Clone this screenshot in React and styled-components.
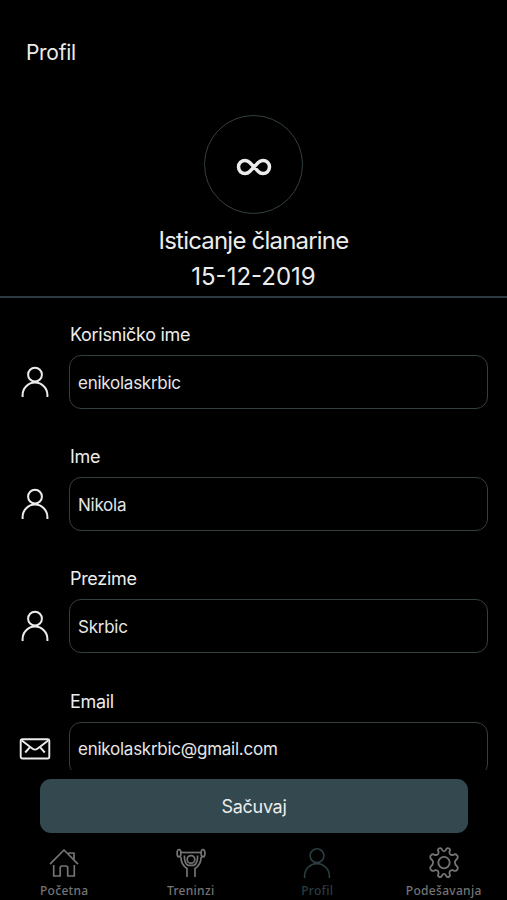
import React from 'react'
import styled, { createGlobalStyle } from 'styled-components'

const GlobalStyle = createGlobalStyle`
  * {
    box-sizing: border-box;
  }

  body {
    margin: 0;
    background: #000;
  }
`

const Screen = styled.div`
  display: flex;
  flex-direction: column;
  width: 507px;
  height: 900px;
  overflow: hidden;
  background: #000;
  color: #ececec;
  font-family: Inter, "Liberation Sans", sans-serif;
`

const Title = styled.h1`
  flex: none;
  margin: 0;
  padding: 38px 26px 0;
  height: 115px;
  font-size: 21px;
  font-weight: 400;
  line-height: 30px;
  letter-spacing: -0.3px;
`

const Membership = styled.section`
  flex: none;
  display: flex;
  flex-direction: column;
  align-items: center;
  height: 183px;
  border-bottom: 2px solid #2b3a40;
`

const Badge = styled.div`
  display: flex;
  align-items: center;
  justify-content: center;
  width: 99px;
  height: 99px;
  margin-bottom: 9px;
  padding-top: 5px;
  border: 1px solid #344043;
  border-radius: 50%;
`

const MembershipText = styled.div`
  font-size: 24px;
  line-height: 35.5px;
  letter-spacing: ${props => props.$spacing || '0'};
`

const Form = styled.div`
  flex: none;
  height: 472px;
  padding-top: 23px;
  overflow: hidden;
`

const Field = styled.div`
  display: grid;
  grid-template-columns: 69px 419px;
  grid-template-rows: 34px 54px;
  height: 122.2px;
`

const Label = styled.label`
  grid-column: 2;
  padding: 1px 0 0 1px;
  font-size: 18px;
  line-height: 26px;
  letter-spacing: ${props => props.$spacing || '0'};
`

const FieldIcon = styled.div`
  display: flex;
  align-items: center;
  justify-content: center;
  grid-column: 1;
  padding-left: 1px;
  color: #ececec;
`

const Input = styled.input`
  width: 419px;
  height: 54px;
  padding: 1px 8px 0;
  border: 1px solid #353e41;
  border-radius: 12px;
  outline: none;
  background: transparent;
  color: #e6e6e6;
  font-family: inherit;
  font-size: 17px;
  letter-spacing: ${props => props.$spacing || '0'};
`

const SaveButton = styled.button`
  flex: none;
  width: 428px;
  height: 54px;
  margin: 9px 0 0 40px;
  padding: 0;
  border: 0;
  border-radius: 11px;
  background: #33484f;
  color: #ececec;
  font-family: inherit;
  font-size: 18px;
  letter-spacing: -0.3px;
`

const TabBar = styled.nav`
  flex: none;
  display: grid;
  grid-template-columns: repeat(4, 126.5px);
  height: 67px;
  padding: 14px 0 0 1px;
`

const Tab = styled.div`
  display: flex;
  flex-direction: column;
  align-items: center;
  color: ${props => props.$active ? '#2b3d41' : '#747474'};
  font-family: "Noto Sans", sans-serif;
  font-size: 12px;
  font-weight: 500;
  line-height: 16px;
  letter-spacing: 0.3px;

  svg {
    height: 32px;
    margin-bottom: 4px;
  }
`

const Icon = ({ width, height, stroke = 1.6, children }) => (
    <svg
        width={width}
        height={height}
        viewBox={`0 0 ${width} ${height}`}
        fill="none"
        stroke="currentColor"
        strokeWidth={stroke}
        strokeLinejoin="round"
    >
        {children}
    </svg>
)

const InfinityIcon = () => (
    <Icon width={36} height={20} stroke={3.5}>
        <path d="M22.3 5.51 A6.5 6.5 0 1 1 22.3 14.49 L13.7 5.51 A6.5 6.5 0 1 0 13.7 14.49 Z" />
    </Icon>
)

const PersonIcon = ({ stroke = 2 }) => (
    <Icon width={30} height={32} stroke={stroke}>
        <circle cx="15" cy="8.7" r="6.9" />
        <path d="M2.6 31 V29 A12.4 12.4 0 0 1 27.4 29 V31" />
    </Icon>
)

const MailIcon = () => (
    <Icon width={32} height={24} stroke={1.9}>
        <rect x="1.7" y="2.3" width="28.6" height="19.2" rx="1.8" />
        <path d="M2.8 3.4 L13.6 11.7 Q16 13.5 18.4 11.7 L29.2 3.4" />
        <path d="M6.2 15.5 L10.8 10.3 M25.8 15.5 L21.2 10.3" />
    </Icon>
)

const HomeIcon = () => (
    <Icon width={30} height={30} stroke={1.7}>
        <path d="M1 16.2 L15 2 L29 16.2" />
        <path d="M20 6 V5 H25 V11.5" />
        <path d="M4.7 17 V28 H11.2 V20 Q11.2 18 13 18 H16.8 Q18.7 18 18.7 20 V28 H25.3 V17" />
    </Icon>
)

const TrainingIcon = () => (
    <Icon width={30} height={30} stroke={1.7}>
        <ellipse cx="3" cy="5.2" rx="1.9" ry="3.7" />
        <ellipse cx="27" cy="5.2" rx="1.9" ry="3.7" />
        <path d="M5 4.5 H25" />
        <circle cx="15" cy="11.4" r="3.8" />
        <path d="M4.9 9 Q5 16.8 11 20.5 V29" />
        <path d="M25.1 9 Q25 16.8 19 20.5 V29" />
        <path d="M8.4 7.5 Q8.2 15.5 12 17.3 H18 Q21.8 15.5 21.6 7.5" />
    </Icon>
)

const GearIcon = () => (
    <Icon width={32} height={32} stroke={1.8}>
        <circle cx="16" cy="15.6" r="5.7" />
        <path d="M10.5 4.4 C8.6 1.8 12.2 .2 13.7 2 C14.7 5.1 17.3 5.1 18.3 2 C19.8 .2 23.4 1.8 21.5 4.4 C21.2 7.1 22.4 8.2 25 8 C29 5.7 31 10 28.7 12.3 C26.3 14 26.3 17.2 28.7 18.9 C31 21.2 29 25.5 25 23.2 C22.4 23 21.2 24.1 21.5 26.8 C23.4 29.4 19.8 31 18.3 29.2 C17.3 26.1 14.7 26.1 13.7 29.2 C12.2 31 8.6 29.4 10.5 26.8 C10.8 24.1 9.6 23 7 23.2 C3 25.5 1 21.2 3.3 18.9 C5.7 17.2 5.7 14 3.3 12.3 C1 10 3 5.7 7 8 C9.6 8.2 10.8 7.1 10.5 4.4 Z" />
    </Icon>
)

const fields = [
    { label: 'Korisničko ime', value: 'enikolaskrbic', icon: <PersonIcon /> },
    { label: 'Ime', value: 'Nikola', icon: <PersonIcon /> },
    { label: 'Prezime', value: 'Skrbic', icon: <PersonIcon /> },
    { label: 'Email', value: 'enikolaskrbic@gmail.com', icon: <MailIcon /> },
]

const App = () => {
    return (
        <Screen>
            <GlobalStyle />
            <Title>Profil</Title>
            <Membership>
                <Badge><InfinityIcon /></Badge>
                <MembershipText $spacing="-0.8px">Isticanje članarine</MembershipText>
                <MembershipText>15-12-2019</MembershipText>
            </Membership>
            <Form>
                {fields.map(field => (
                    <Field key={field.label}>
                        <Label $spacing="-0.3px">{field.label}</Label>
                        <FieldIcon>{field.icon}</FieldIcon>
                        <Input $spacing="-0.25px" defaultValue={field.value} />
                    </Field>
                ))}
            </Form>
            <SaveButton>Sačuvaj</SaveButton>
            <TabBar>
                <Tab><HomeIcon />Početna</Tab>
                <Tab><TrainingIcon />Treninzi</Tab>
                <Tab $active><PersonIcon stroke={1.6} />Profil</Tab>
                <Tab><GearIcon />Podešavanja</Tab>
            </TabBar>
        </Screen>
    )
}

export default App
